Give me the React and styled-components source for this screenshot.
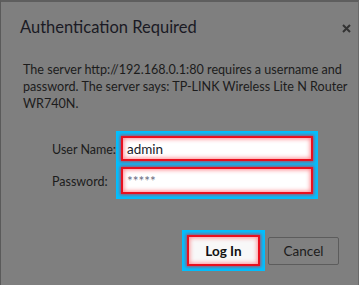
import React from 'react';
import styled, { createGlobalStyle } from 'styled-components';

const Global = createGlobalStyle`
html, body {
  margin: 0;
  padding: 0;
  background: #7f7f7f;
}
`;

const Dialog = styled.div`
box-sizing: border-box;
width: 359px;
height: 285px;
background: #7f7f7f;
border-top: 2px solid #5e5e5e;
border-left: 1px solid #5a5a5a;
border-right: 1px solid #6a6a6a;
font-family: Lato, "Open Sans", sans-serif;
color: #1c1c1c;
display: flex;
flex-direction: column;
`;

const Header = styled.div`
display: flex;
justify-content: space-between;
align-items: flex-start;
padding: 14px 7px 0 19px;
`;

const Title = styled.h1`
margin: 0;
font-size: 16.5px;
font-weight: 400;
line-height: 22px;
color: #1a1a24;
`;

const Close = styled.span`
width: 9px;
height: 9px;
margin-top: 1px;
`;

const Message = styled.p`
margin: 23px 6px 0 22px;
font-size: 12.6px;
line-height: 17px;
`;

const Form = styled.div`
display: flex;
margin-top: 19px;
padding-left: 51px;
`;

const Labels = styled.div`
display: flex;
flex-direction: column;
gap: 6px;
padding-top: 5px;
width: 64px;
`;

const Label = styled.label`
height: 26px;
display: flex;
align-items: center;
font-size: 12.5px;
white-space: nowrap;
`;

const Highlight = styled.div`
display: flex;
flex-direction: column;
gap: 6px;
padding: 5px;
background: #00c0ff;
`;

const Input = styled.div`
box-sizing: border-box;
width: 192px;
height: ${(p) => p.h}px;
background: #fff;
border: 2px solid #e8101e;
box-shadow: 0 0 3px 1px rgba(240, 30, 40, 0.7), inset 0 0 4px 1px rgba(255, 60, 70, 0.6);
display: flex;
align-items: center;
padding-left: 4px;
font-size: 13.5px;
color: ${(p) => (p.masked ? '#6a6a80' : '#1a1a2a')};
`;

const Actions = styled.div`
display: flex;
justify-content: flex-end;
align-items: center;
gap: 3px;
margin-top: 31px;
padding-right: 19px;
`;

const PrimaryWrap = styled.div`
padding: 5px;
background: #00c0ff;
`;

const Button = styled.button`
box-sizing: border-box;
width: ${(p) => p.w}px;
height: ${(p) => p.h}px;
font-family: inherit;
font-size: 13.5px;
border-radius: 2px;
padding: 0;
cursor: pointer;
`;

const LoginButton = styled(Button)`
background: #f8f8f8;
border: 2px solid #e8101e;
border-radius: 0;
font-weight: 700;
color: #111;
box-shadow: 0 0 3px 1px rgba(240, 30, 40, 0.7), inset 0 0 4px 1px rgba(255, 60, 70, 0.55);
`;

const CancelButton = styled(Button)`
background: #808080;
border: 1px solid #5c5c5c;
color: #1c1c1c;
`;

export default function App() {
  return (
    <>
      <Global />
      <Dialog>
        <Header>
          <Title>Authentication Required</Title>
          <Close>
            <svg width="9" height="9" viewBox="0 0 9 9">
              <path d="M1 1 L8 8 M8 1 L1 8" stroke="#333" strokeWidth="2" />
            </svg>
          </Close>
        </Header>
        <Message>
          The server http://192.168.0.1:80 requires a username and password. The server says: TP-LINK Wireless Lite N Router WR740N.
        </Message>
        <Form>
          <Labels>
            <Label>User Name:</Label>
            <Label>Password:</Label>
          </Labels>
          <Highlight>
            <Input h={25}>admin</Input>
            <Input h={27} masked>*****</Input>
          </Highlight>
        </Form>
        <Actions>
          <PrimaryWrap>
            <LoginButton w={73} h={31}>Log In</LoginButton>
          </PrimaryWrap>
          <CancelButton w={71} h={28}>Cancel</CancelButton>
        </Actions>
      </Dialog>
    </>
  );
}
